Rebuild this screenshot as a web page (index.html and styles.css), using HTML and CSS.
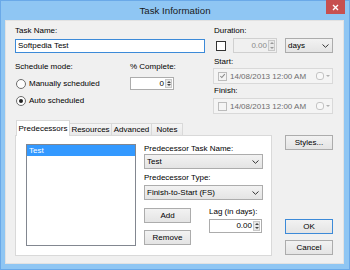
FILE: index.html
```html
<!DOCTYPE html>
<html>
<head>
<meta charset="utf-8">
<link rel="stylesheet" href="styles.css">
</head>
<body>
<div class="window">
  <div class="titlebar">
    <span></span>
    <span class="title">Task Information</span>
    <span class="close"><svg width="7" height="7" viewBox="0 0 7 7"><path d="M1 1L6 6M6 1L1 6" stroke="#fff" stroke-width="1.4"/></svg></span>
  </div>
  <div class="content">
    <div class="top">
      <div class="col-left">
        <span class="lbl">Task Name:</span>
        <div class="textbox focus">Softpedia Test</div>
        <div class="sched">
          <div>
            <span class="lbl">Schedule mode:</span>
            <div class="radios">
              <div class="radio-row"><span class="radio"></span><span>Manually scheduled</span></div>
              <div class="radio-row"><span class="radio on"></span><span>Auto scheduled</span></div>
            </div>
          </div>
          <div>
            <span class="lbl">% Complete:</span>
            <div class="spin pct"><span class="val">0</span><span class="arrows"><i class="up"></i><i class="dn"></i></span></div>
          </div>
        </div>
      </div>
      <div class="col-right">
        <span class="lbl ind">Duration:</span>
        <div class="dur-row">
          <span class="check"></span>
          <div class="spin dis dur"><span class="val">0.00</span><span class="arrows"><i class="up"></i><i class="dn"></i></span></div>
          <div class="combo days"><span>days</span><svg width="7" height="4" viewBox="0 0 7 4"><path d="M0.5 0.5L3.5 3.3L6.5 0.5" fill="none" stroke="#333" stroke-width="1"/></svg></div>
        </div>
        <span class="lbl ind start">Start:</span>
        <div class="picker">
          <span class="check sm dis-check"><svg width="8" height="8" viewBox="0 0 8 8"><path d="M1.5 4L3.2 5.8L6.6 1.8" fill="none" stroke="#8a8a8a" stroke-width="1.2"/></svg></span>
          <span class="date">14/08/2013 12:00 AM</span>
          <span class="cal"></span><i class="tri"></i>
        </div>
        <span class="lbl ind finish">Finish:</span>
        <div class="picker p2">
          <span class="check sm dis-check"></span>
          <span class="date">14/08/2013 12:00 AM</span>
          <span class="cal"></span><i class="tri"></i>
        </div>
      </div>
    </div>
    <div class="bottom">
      <div class="tabarea">
        <div class="tabs">
          <span class="tab sel w1">Predecessors</span>
          <span class="tab w2">Resources</span>
          <span class="tab w3">Advanced</span>
          <span class="tab w4">Notes</span>
        </div>
        <div class="panel">
          <div class="listbox"><div class="item">Test</div></div>
          <div class="form">
            <span class="lbl s">Predecessor Task Name:</span>
            <div class="combo wide"><span>Test</span><svg width="7" height="4" viewBox="0 0 7 4"><path d="M0.5 0.5L3.5 3.3L6.5 0.5" fill="none" stroke="#333" stroke-width="1"/></svg></div>
            <span class="lbl s ptype">Predecessor Type:</span>
            <div class="combo wide ct2"><span>Finish-to-Start (FS)</span><svg width="7" height="4" viewBox="0 0 7 4"><path d="M0.5 0.5L3.5 3.3L6.5 0.5" fill="none" stroke="#333" stroke-width="1"/></svg></div>
            <div class="act">
              <div class="btncol">
                <div class="btn add">Add</div>
                <div class="btn remove">Remove</div>
              </div>
              <div class="lagcol">
                <span class="lbl s lag">Lag (in days):</span>
                <div class="spin lagspin"><span class="val">0.00</span><span class="arrows"><i class="up"></i><i class="dn"></i></span></div>
              </div>
            </div>
          </div>
        </div>
      </div>
      <div class="sidebtns">
        <div class="btn styles">Styles...</div>
        <div class="btn ok">OK</div>
        <div class="btn cancel">Cancel</div>
      </div>
    </div>
  </div>
</div>
</body>
</html>
```
FILE: styles.css
```css
* { box-sizing: border-box; }
body {
  margin: 0;
  width: 350px;
  height: 270px;
  overflow: hidden;
  background: #8fc6f3;
  font-family: "Liberation Sans", Arial, sans-serif;
  font-size: 8px;
  color: #000;
}
.window {
  height: 270px;
  border: 1px solid #6aa9e8;
  display: flex;
  flex-direction: column;
}
.titlebar {
  height: 19px;
  display: grid;
  grid-template-columns: 1fr auto 1fr;
  align-items: start;
}
.title {
  font-size: 9.7px;
  line-height: 19px;
  color: #1a1a1a;
  white-space: nowrap;
}
.close {
  justify-self: end;
  margin-right: 4px;
  margin-top: -1px;
  width: 19px;
  height: 14px;
  background: #c75050;
  display: flex;
  align-items: center;
  justify-content: center;
}
.content {
  flex: 1;
  margin: 0 5px 5px 4px;
  background: #f0f0f0;
  box-shadow: inset 0 0 0 1px #e2e2e2;
  padding: 5px 11px 0 10px;
}
.lbl {
  display: block;
  line-height: 12px;
  height: 12px;
  white-space: nowrap;
}
.lbl.ind { padding-left: 1px; }
.top {
  display: grid;
  grid-template-columns: 190px 120px;
  column-gap: 8px;
  height: 89px;
}
.textbox {
  margin-top: 2px;
  height: 14px;
  border: 1px solid #3c8ad8;
  background: #fff;
  padding-left: 2px;
  line-height: 12px;
}
.sched {
  margin-top: 8px;
  display: grid;
  grid-template-columns: 115px 1fr;
}
.radios { margin-top: 2px; }
.radio-row {
  height: 17px;
  display: flex;
  align-items: center;
}
.radio {
  width: 10px;
  height: 10px;
  margin-left: 1px;
  margin-right: 3px;
  border-radius: 50%;
  border: 1px solid #6d6d6d;
  background: #fdfdfd;
  display: flex;
  align-items: center;
  justify-content: center;
}
.radio.on::after {
  content: "";
  width: 4px;
  height: 4px;
  border-radius: 50%;
  background: #222;
}
.spin {
  display: flex;
  align-items: center;
  border: 1px solid #acacac;
  background: #fff;
  padding-right: 1px;
}
.spin .val {
  flex: 1;
  text-align: right;
  padding-right: 1px;
  line-height: 10px;
}
.arrows {
  width: 7px;
  height: calc(100% - 2px);
  display: flex;
  flex-direction: column;
  justify-content: space-around;
  align-items: center;
  background: #e8e8e8;
  border: 1px solid #c8c8c8;
}
.arrows i {
  display: block;
  width: 0;
  height: 0;
  border-left: 2px solid transparent;
  border-right: 2px solid transparent;
}
.arrows .up { border-bottom: 2px solid #444; }
.arrows .dn { border-top: 2px solid #444; }
.pct {
  margin-top: 4px;
  width: 44px;
  height: 13px;
}
.dur-row {
  margin-top: 1px;
  height: 15px;
  display: flex;
  align-items: center;
}
.check {
  width: 10px;
  height: 10px;
  margin-left: 3px;
  border: 1px solid #333;
  background: #fff;
  display: flex;
  align-items: center;
  justify-content: center;
}
.spin.dis {
  background: #f0f0f0;
  border-color: #d0d0d0;
  color: #8a8a8a;
}
.spin.dis .arrows i.up { border-bottom-color: #999; }
.spin.dis .arrows i.dn { border-top-color: #999; }
.dur {
  width: 44px;
  height: 15px;
  margin-left: 7px;
}
.combo {
  height: 15px;
  border: 1px solid #acacac;
  background: linear-gradient(#f2f2f2, #e4e4e4);
  display: flex;
  align-items: center;
  justify-content: space-between;
  padding: 0 3px 0 2px;
  line-height: 13px;
  white-space: nowrap;
}
.days {
  width: 48px;
  margin-left: 8px;
}
.start { margin-top: 3px; }
.finish { margin-top: 1px; }
.picker {
  height: 16px;
  border: 1px solid #d9d9d9;
  background: #f4f4f4;
  display: flex;
  align-items: center;
  color: #6d6d6d;
}
.p2 { margin-top: 1px; }
.check.sm {
  width: 9px;
  height: 9px;
  margin-left: 4px;
}
.check.dis-check {
  border-color: #bcbcbc;
  background: #f4f4f4;
}
.date {
  margin-left: 3px;
  flex: 1;
  white-space: nowrap;
}
.cal {
  width: 8px;
  height: 8px;
  border: 1px solid #c4c4c4;
  border-radius: 3px;
  background: #f8f8f8;
}
.picker .tri {
  display: block;
  margin: 0 2px 0 2px;
  width: 0;
  height: 0;
  border-left: 2px solid transparent;
  border-right: 2px solid transparent;
  border-top: 2px solid #b0b0b0;
}
.bottom {
  margin-top: 6px;
  display: grid;
  grid-template-columns: 257px 48px;
  column-gap: 13px;
}
.tabs {
  height: 15px;
  padding-left: 1px;
  display: flex;
  align-items: flex-end;
}
.tab {
  height: 12px;
  border: 1px solid #d9d9d9;
  border-bottom: none;
  border-left: none;
  background: linear-gradient(#f5f5f5, #e9e9e9);
  text-align: center;
  line-height: 12px;
  white-space: nowrap;
}
.tab.sel {
  height: 16px;
  margin-bottom: -1px;
  border-left: 1px solid #d9d9d9;
  background: #fff;
  line-height: 15px;
  position: relative;
  z-index: 1;
}
.w1 { width: 54px; }
.w2 { width: 42px; }
.w3 { width: 40px; }
.w4 { width: 31px; }
.panel {
  height: 121px;
  border: 1px solid #d9d9d9;
  background: #fff;
  display: flex;
  padding: 8px 0 0 10px;
}
.listbox {
  width: 110px;
  height: 102px;
  border: 1px solid #828790;
  background: #fff;
}
.item {
  height: 11px;
  background: #3399ff;
  color: #fff;
  line-height: 11px;
  padding-left: 2px;
}
.form {
  margin-left: 8px;
  width: 119px;
}
.lbl.s {
  line-height: 10px;
  height: 10px;
}
.ptype { margin-top: 4px; }
.ct2 { margin-top: 2px; }
.act {
  display: grid;
  grid-template-columns: 47px 1fr;
  column-gap: 18px;
}
.btn {
  height: 15px;
  border: 1px solid #acacac;
  background: linear-gradient(#f2f2f2, #e4e4e4);
  text-align: center;
  line-height: 13px;
  white-space: nowrap;
}
.add { margin-top: 8px; }
.remove { margin-top: 7px; }
.lag { margin-top: 7px; }
.lagspin {
  margin-top: 2px;
  width: 53px;
  height: 14px;
}
.styles { margin-top: 15px; }
.ok {
  margin-top: 69px;
  border-color: #3c8ad8;
}
.cancel { margin-top: 6px; }
```
